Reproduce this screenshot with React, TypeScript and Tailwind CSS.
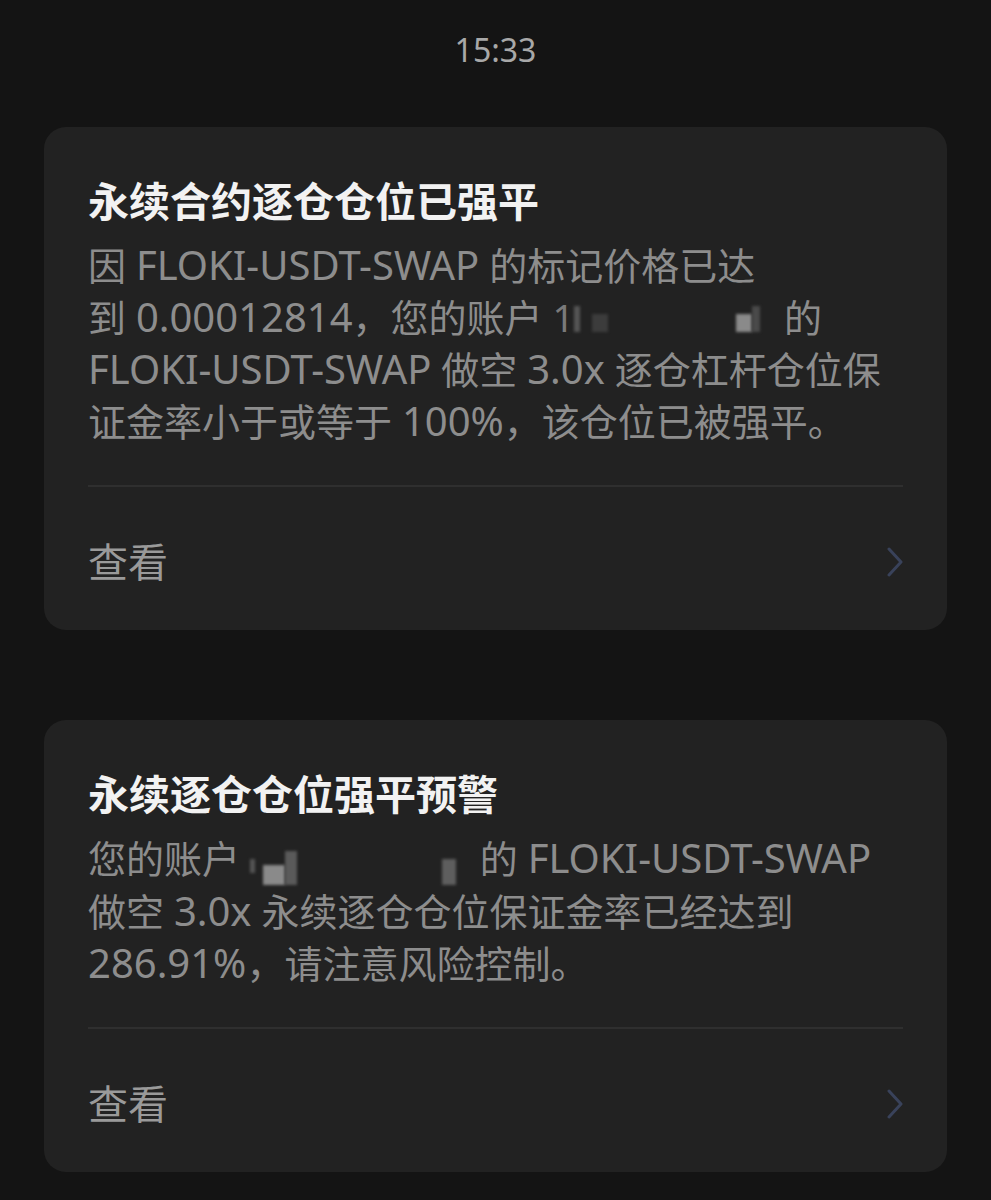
import React from 'react';

type Block = { w: number; h: number; color: string; mt?: number; blur?: boolean };

function Redacted({ width, blocks }: { width: number; blocks: (Block | { gap: number })[] }) {
    return (
        <span className="inline-flex items-end align-baseline h-[30px]" style={{ width }}>
            {blocks.map((b, i) =>
                'gap' in b ? (
                    <span key={i} className="inline-block" style={{ width: b.gap }} />
                ) : (
                    <span
                        key={i}
                        className="inline-block"
                        style={{
                            width: b.w,
                            height: b.h,
                            backgroundColor: b.color,
                            marginBottom: b.mt ?? 0,
                            filter: b.blur ? 'blur(1.5px)' : undefined,
                        }}
                    />
                ),
            )}
        </span>
    );
}

// latin runs sit a little larger than the CJK glyphs in the original font
function L({ children }: { children: React.ReactNode }) {
    return <span className="text-[40px]">{children}</span>;
}

function Chevron() {
    return (
        <svg width="16" height="30" viewBox="0 0 16 30" fill="none">
            <polyline
                points="2,2 14,15 2,28"
                stroke="#39425a"
                strokeWidth="3"
                strokeLinecap="round"
                strokeLinejoin="round"
            />
        </svg>
    );
}

type CardProps = {
    title: string;
    lines: React.ReactNode[];
};

function NoticeCard({ title, lines }: CardProps) {
    return (
        <div className="bg-[#222222] rounded-[22px] px-[44px] pt-[48px]">
            <h2 className="text-[41px] leading-[52px] font-semibold text-[#f2f2f2]">{title}</h2>
            <div className="mt-[12px] text-[38px] leading-[52px] text-[#8d8d8d]">
                {lines.map((line, i) => (
                    <div key={i} className="whitespace-nowrap">
                        {line}
                    </div>
                ))}
            </div>
            <div className="mt-[38px] h-[2px] bg-[#2f2f2f]" />
            <div className="h-[143px] flex items-center justify-between pt-[6px]">
                <span className="text-[40px] text-[#9a9a9a]">查看</span>
                <Chevron />
            </div>
        </div>
    );
}

export default function App() {
    const font = { fontFamily: '"Noto Sans", "Noto Sans CJK SC", sans-serif' };

    const card1Lines = [
        <>
            因 <L>FLOKI-USDT-SWAP</L> 的标记价格已达
        </>,
        <>
            到 <L>0.00012814</L>，您的账户 <span className="text-[#7a7a7a]">1</span>
            <Redacted
                width={200}
                blocks={[
                    { w: 6, h: 26, color: '#555', blur: true },
                    { gap: 12 },
                    { w: 16, h: 18, color: '#3c3c3c', blur: true },
                    { gap: 128 },
                    { w: 16, h: 18, color: '#8a8a8a', blur: true },
                    { w: 8, h: 26, color: '#4a4a4a', blur: true },
                ]}
            />{' '}
            的
        </>,
        <>
            <L>FLOKI-USDT-SWAP</L> 做空 <L>3.0x</L> 逐仓杠杆仓位保
        </>,
        <>
            证金率小于或等于 <L>100%</L>，该仓位已被强平。
        </>,
    ];

    const card2Lines = [
        <>
            您的账户{' '}
            <Redacted
                width={220}
                blocks={[
                    { w: 5, h: 14, color: '#555', mt: 12, blur: true },
                    { gap: 8 },
                    { w: 22, h: 20, color: '#8a8a8a', blur: true },
                    { w: 12, h: 34, color: '#5a5a5a', blur: true },
                    { gap: 145 },
                    { w: 14, h: 26, color: '#5e5e5e', blur: true },
                ]}
            />{' '}
            的 <L>FLOKI-USDT-SWAP</L>
        </>,
        <>
            做空 <L>3.0x</L> 永续逐仓仓位保证金率已经达到
        </>,
        <>
            <L>286.91%</L>，请注意风险控制。
        </>,
    ];

    return (
        <div className="min-h-[1200px] bg-[#141414]" style={font}>
            <div className="h-[100px] flex items-center justify-center">
                <span className="text-[32px] text-[#a8a8a8]">15:33</span>
            </div>
            <div className="flex flex-col gap-[90px] px-[44px] pt-[27px] pb-[28px]">
                <NoticeCard title="永续合约逐仓仓位已强平" lines={card1Lines} />
                <NoticeCard title="永续逐仓仓位强平预警" lines={card2Lines} />
            </div>
        </div>
    );
}
